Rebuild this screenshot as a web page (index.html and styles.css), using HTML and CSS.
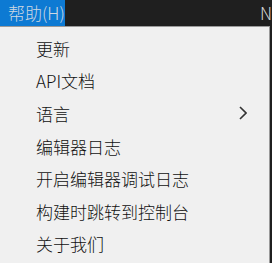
FILE: index.html
```html
<!DOCTYPE html>
<html lang="zh-CN">
<head>
<meta charset="utf-8">
<link rel="stylesheet" href="styles.css">
</head>
<body>
<div class="menubar">
  <div class="menubar-item active">帮助(H)</div>
  <div class="menubar-item next">N</div>
</div>
<div class="menu">
  <div class="menu-item">更新</div>
  <div class="menu-item">API文档</div>
  <div class="menu-item has-sub">语言
    <svg class="chevron" width="8" height="14" viewBox="0 0 8 14"><path d="M1 1 L7 7 L1 13" fill="none" stroke="#333" stroke-width="1.6"/></svg>
  </div>
  <div class="menu-item">编辑器日志</div>
  <div class="menu-item">开启编辑器调试日志</div>
  <div class="menu-item">构建时跳转到控制台</div>
  <div class="menu-item">关于我们</div>
</div>
</body>
</html>
```
FILE: styles.css
```css
html, body {
  margin: 0;
  padding: 0;
  background: #1f1f1f;
  width: 272px;
  height: 263px;
  overflow: hidden;
  font-family: "Noto Sans CJK SC", "Noto Sans", sans-serif;
  font-weight: 300;
}
.menubar {
  display: flex;
  height: 26px;
  background: #1f1f1f;
}
.menubar-item {
  font-size: 17px;
  line-height: 26px;
  color: #cfd8e2;
  white-space: nowrap;
}
.menubar-item.active {
  background: #0d7ad3;
  width: 71px;
  box-sizing: border-box;
  padding-left: 8px;
}
.menubar-item.next {
  margin-left: 195px;
  color: #d8d8d8;
}
.menu {
  width: 270px;
  height: 237px;
  background: #f0f0f0;
  border-top: 1px solid #9a9a9a;
  border-right: 1px solid #9a9a9a;
  padding-top: 5px;
  box-sizing: border-box;
}
.menu-item {
  display: flex;
  align-items: center;
  height: 32.6px;
  padding-left: 36px;
  padding-right: 22px;
  font-size: 17px;
  color: #111;
  white-space: nowrap;
}
.menu-item.has-sub {
  justify-content: space-between;
}
.chevron {
  display: block;
}
```
